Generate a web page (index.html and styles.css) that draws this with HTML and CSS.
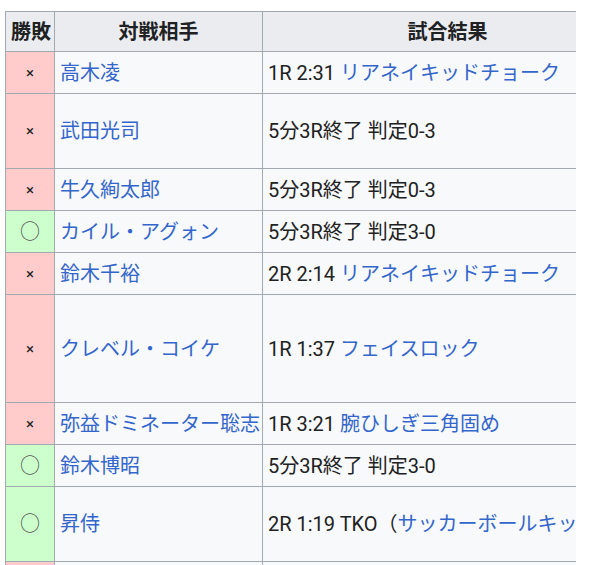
FILE: index.html
```html
<!DOCTYPE html>
<html lang="ja">
<head>
<meta charset="utf-8">
<link rel="stylesheet" href="styles.css">
</head>
<body>
<div class="clip">
<table class="results">
<colgroup><col class="c1"><col class="c2"><col class="c3"><col class="c4"></colgroup>
<thead>
<tr class="head"><th>勝敗</th><th>対戦相手</th><th>試合結果</th><th>大会名</th></tr>
</thead>
<tbody>
<tr><td class="lose">×</td><td><a>高木凌</a></td><td>1R 2:31 <a>リアネイキッドチョーク</a></td><td></td></tr>
<tr class="h76"><td class="lose">×</td><td><a>武田光司</a></td><td>5分3R終了 判定0-3</td><td></td></tr>
<tr><td class="lose">×</td><td><a>牛久絢太郎</a></td><td>5分3R終了 判定0-3</td><td></td></tr>
<tr><td class="win">○</td><td><a>カイル・アグォン</a></td><td>5分3R終了 判定3-0</td><td></td></tr>
<tr><td class="lose">×</td><td><a>鈴木千裕</a></td><td>2R 2:14 <a>リアネイキッドチョーク</a></td><td></td></tr>
<tr class="h108"><td class="lose">×</td><td><a>クレベル・コイケ</a></td><td>1R 1:37 <a>フェイスロック</a></td><td></td></tr>
<tr><td class="lose">×</td><td><a>弥益ドミネーター聡志</a></td><td>1R 3:21 <a>腕ひしぎ三角固め</a></td><td></td></tr>
<tr><td class="win">○</td><td><a>鈴木博昭</a></td><td>5分3R終了 判定3-0</td><td></td></tr>
<tr class="h75"><td class="win">○</td><td><a>昇侍</a></td><td>2R 1:19 TKO（<a>サッカーボールキック</a>）</td><td></td></tr>
<tr><td class="lose">×</td><td><a>&nbsp;</a></td><td>&nbsp;</td><td></td></tr>
</tbody>
</table>
</div>
</body>
</html>
```
FILE: styles.css
```css
html, body {
  margin: 0;
  padding: 0;
  background: #ffffff;
}
body {
  font-family: Roboto, "Noto Sans CJK JP", sans-serif;
  font-size: 20px;
  color: #202122;
}
.clip {
  margin: 11px 0 0 5px;
  width: 571px;
  height: 554px;
  overflow: hidden;
}
.results {
  border-collapse: collapse;
  table-layout: fixed;
  width: 900px;
  background: #f8f9fa;
}
.c1 { width: 49px; }
.c2 { width: 208px; }
.c3 { width: 370px; }
.c4 { width: 273px; }
.results th,
.results td {
  border: 1px solid #a2a9b1;
  padding: 0 5px;
  line-height: 30px;
  white-space: nowrap;
  text-align: left;
  vertical-align: middle;
}
.results th {
  background: #eaecf0;
  font-weight: bold;
  text-align: center;
}
.results tr.head { height: 40px; }
.results tr { height: 42px; }
.results tr.h76 { height: 75px; }
.results tr.h108 { height: 108px; }
.results tr.h75 { height: 75px; }
.results a {
  color: #3366cc;
  text-decoration: none;
}
.lose, .win {
  text-align: center !important;
  font-size: 15px;
}
.lose { background: #ffcbcb; }
.win { background: #cfc; font-size: 20px; color: #555; }
```
